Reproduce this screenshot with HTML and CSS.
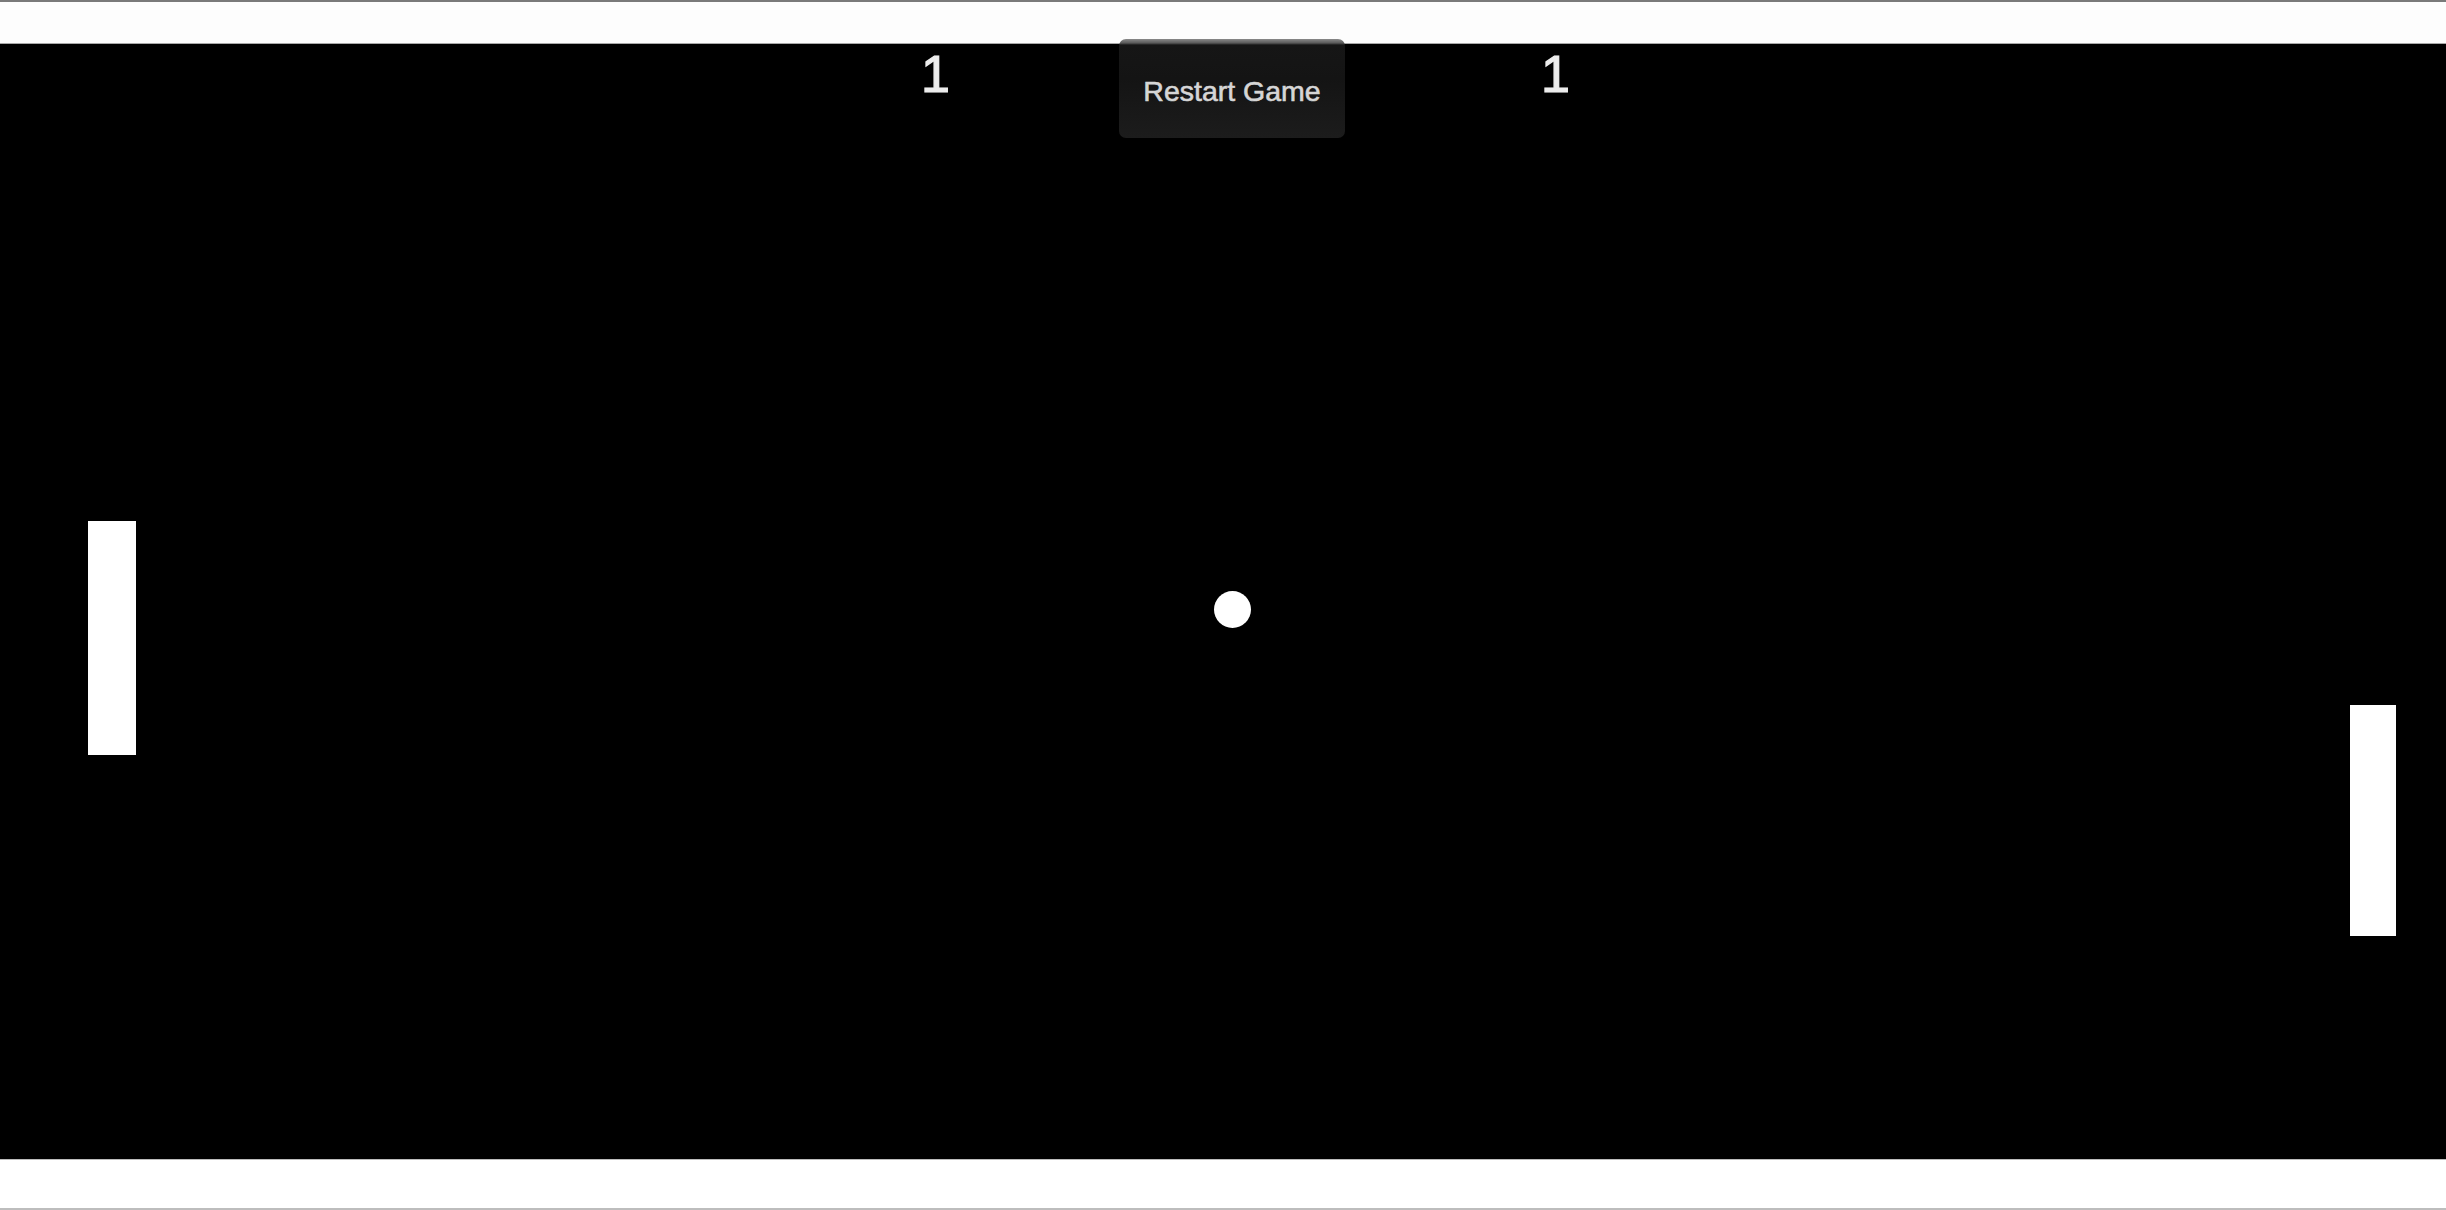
FILE: index.html
```html
<!DOCTYPE html>
<html lang="en">
<head>
<meta charset="utf-8">
<title>Pong</title>
<link rel="stylesheet" href="styles.css">
</head>
<body>
<div class="frame">
  <div class="gap-top"></div>
  <div class="field">
    <span class="score score-left">1</span>
    <button class="restart" type="button">Restart Game</button>
    <span class="score score-right">1</span>
    <div class="paddle paddle-left"></div>
    <div class="ball"></div>
    <div class="paddle paddle-right"></div>
  </div>
  <div class="gap-bottom"></div>
</div>
</body>
</html>
```
FILE: styles.css
```css
html, body {
  margin: 0;
  padding: 0;
  background: #fff;
}
body {
  width: 2446px;
  height: 1210px;
  overflow: hidden;
  font-family: "Liberation Sans", Arial, sans-serif;
}
.frame {
  display: flex;
  flex-direction: column;
  height: 1210px;
  border-top: 2px solid #7a7a7a;
  border-bottom: 2px solid #bdbdbd;
  box-sizing: border-box;
}
.gap-top {
  height: 41px;
  background: #fdfdfd;
}
.field {
  position: relative;
  height: 1115px;
  background: #000;
  border-top: 1px solid #a8a8a8;
  border-bottom: 1px solid #bcbcbc;
}
.gap-bottom {
  flex: 1;
  background: #fff;
}
.score {
  position: absolute;
  top: 4px;
  font-size: 52px;
  line-height: 1;
  color: #ececec;
  -webkit-text-stroke: 1.2px #ececec;
}
.score-left { left: 921px; }
.score-right { left: 1541px; }
.restart {
  position: absolute;
  left: 1119px;
  top: -5px;
  width: 226px;
  height: 99px;
  padding: 6px 0 0;
  border: none;
  border-radius: 7px;
  background: linear-gradient(to bottom, #8a8a8a 0, #5a5a5a 4px, #161616 6px, #141414 40%, #1c1c1c 100%);
  color: #d6d6d6;
  font-family: "Liberation Sans", Arial, sans-serif;
  font-size: 28.5px;
  -webkit-text-stroke: 0.6px #d6d6d6;
  cursor: pointer;
}
.paddle {
  position: absolute;
  background: #fff;
}
.paddle-left {
  left: 88px;
  top: 477px;
  width: 48px;
  height: 234px;
}
.paddle-right {
  left: 2350px;
  top: 661px;
  width: 46px;
  height: 231px;
}
.ball {
  position: absolute;
  left: 1214px;
  top: 547px;
  width: 37px;
  height: 37px;
  border-radius: 50%;
  background: #fff;
}
```
